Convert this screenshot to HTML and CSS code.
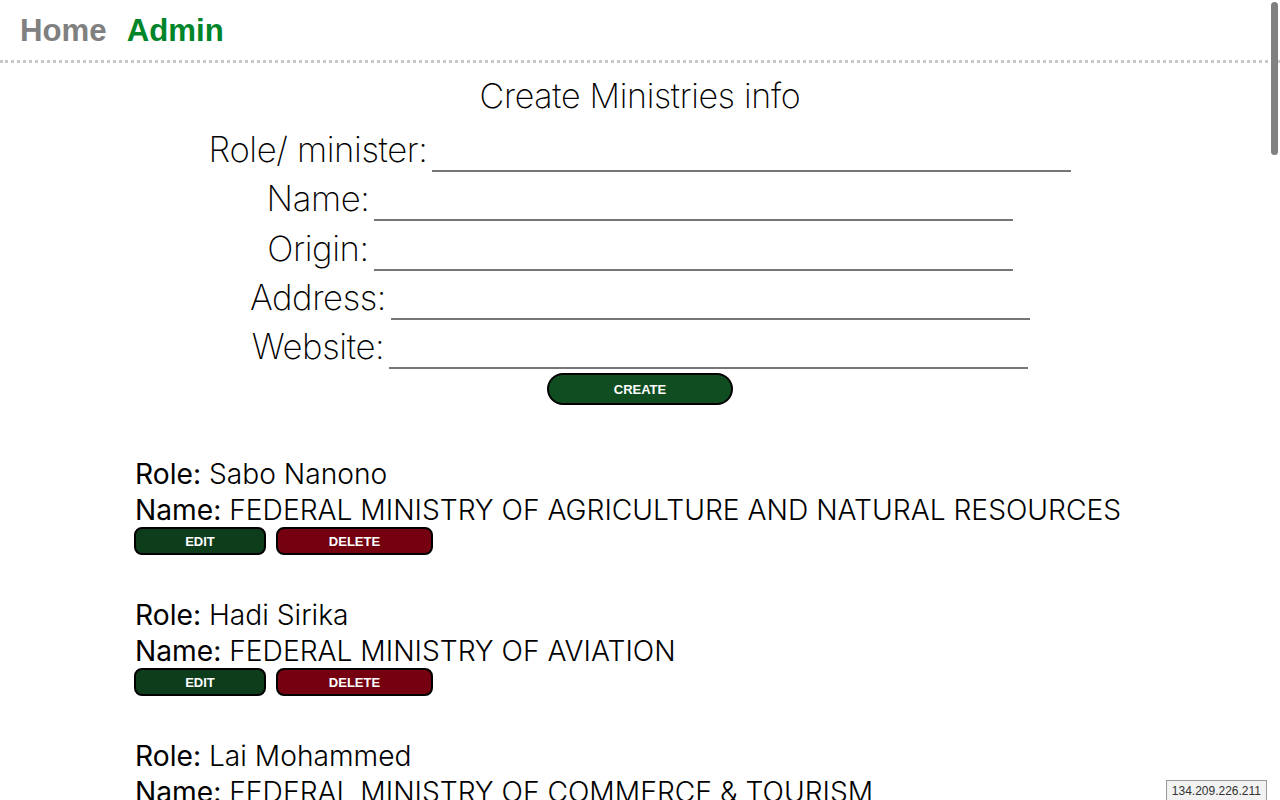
FILE: index.html
```html
<!DOCTYPE html>
<html lang="en">
<head>
<meta charset="utf-8">
<title>Admin - Ministries</title>
<link rel="stylesheet" href="styles.css">
</head>
<body>
<nav class="topnav">
  <a class="nav-link nav-home" href="#">Home</a>
  <a class="nav-link nav-admin" href="#">Admin</a>
</nav>
<main class="page">
  <form class="create-form">
    <h1 class="form-title">Create Ministries info</h1>
    <div class="form-row"><label class="form-label">Role/ minister:</label><input class="form-input" type="text"></div>
    <div class="form-row"><label class="form-label">Name:</label><input class="form-input" type="text"></div>
    <div class="form-row"><label class="form-label">Origin:</label><input class="form-input" type="text"></div>
    <div class="form-row"><label class="form-label">Address:</label><input class="form-input" type="text"></div>
    <div class="form-row"><label class="form-label">Website:</label><input class="form-input" type="text"></div>
    <div class="form-actions"><button class="btn-create" type="button">CREATE</button></div>
  </form>

  <section class="list">
    <article class="item">
      <div class="item-line"><span class="item-key">Role:</span> <span class="item-val">Sabo Nanono</span></div>
      <div class="item-line"><span class="item-key">Name:</span> <span class="item-val">FEDERAL MINISTRY OF AGRICULTURE AND NATURAL RESOURCES</span></div>
      <div class="item-actions"><button class="btn btn-edit" type="button">EDIT</button><button class="btn btn-delete" type="button">DELETE</button></div>
    </article>
    <article class="item">
      <div class="item-line"><span class="item-key">Role:</span> <span class="item-val">Hadi Sirika</span></div>
      <div class="item-line"><span class="item-key">Name:</span> <span class="item-val">FEDERAL MINISTRY OF AVIATION</span></div>
      <div class="item-actions"><button class="btn btn-edit" type="button">EDIT</button><button class="btn btn-delete" type="button">DELETE</button></div>
    </article>
    <article class="item">
      <div class="item-line"><span class="item-key">Role:</span> <span class="item-val">Lai Mohammed</span></div>
      <div class="item-line"><span class="item-key">Name:</span> <span class="item-val">FEDERAL MINISTRY OF COMMERCE &amp; TOURISM</span></div>
      <div class="item-actions"><button class="btn btn-edit" type="button">EDIT</button><button class="btn btn-delete" type="button">DELETE</button></div>
    </article>
  </section>
</main>
<div class="ip-badge">134.209.226.211</div>
<div class="scroll-thumb"></div>
</body>
</html>
```

FILE: styles.css
```css
html {
  scrollbar-width: none;
}
html::-webkit-scrollbar {
  display: none;
}
body {
  margin: 0;
  font-family: Inter, "Liberation Sans", sans-serif;
  color: #000;
  background: #fff;
}
.topnav {
  display: flex;
  align-items: center;
  gap: 20px;
  padding: 0 0 0 21px;
  border-bottom: 3px dotted #c8c8c8;
  box-sizing: border-box;
  height: 63px;
}
.nav-link {
  font-family: "Liberation Sans", Arial, sans-serif;
  font-weight: bold;
  font-size: 31.2px;
  text-decoration: none;
  line-height: 1;
  margin-top: 2px;
}
.nav-home { color: #808080; margin-left: -1px; }
.nav-admin { color: #00852a; }

.create-form {
  display: flex;
  flex-direction: column;
  align-items: center;
}
.form-title {
  margin: 12px 0 8px;
  font-size: 34px;
  font-weight: 200;
  line-height: 42px;
  letter-spacing: -0.3px;
}
.form-row {
  display: flex;
  align-items: baseline;
  justify-content: center;
  gap: 5px;
  height: 49.25px;
}
.form-label {
  font-size: 34.7px;
  font-weight: 200;
  line-height: 49px;
  letter-spacing: -0.4px;
}
.form-input {
  width: 639px;
  height: 30px;
  border: none;
  border-bottom: 2px solid #767676;
  padding: 0;
  font: inherit;
  font-size: 20px;
  outline: none;
  background: transparent;
}
.form-actions {
  margin-top: 2px;
}
.btn-create {
  width: 186px;
  height: 32px;
  border: 2px solid #000;
  border-radius: 16px;
  background: #104e22;
  color: #fff;
  font-family: "Liberation Sans", Arial, sans-serif;
  font-weight: bold;
  font-size: 13px;
  cursor: pointer;
}

.list {
  padding: 51px 0 0 135px;
}
.item {
  margin-bottom: 42px;
}
.item-line {
  font-size: 28.2px;
  line-height: 36px;
  white-space: nowrap;
}
.item-key { font-weight: 400; }
.item-val { font-weight: 300; }
.item-actions {
  display: flex;
  gap: 10px;
  margin-left: -1px;
  margin-top: -1px;
}
.btn {
  height: 28px;
  border: 2px solid #000;
  border-radius: 8px;
  color: #fff;
  font-family: "Liberation Sans", Arial, sans-serif;
  font-weight: bold;
  font-size: 13px;
  cursor: pointer;
}
.btn-edit { width: 132px; background: #0e3d1c; }
.btn-delete { width: 157px; background: #740010; }

.ip-badge {
  position: fixed;
  right: 13px;
  bottom: 0;
  padding: 3px 5px 2px;
  background: #f2f2f2;
  border: 1px solid #999;
  border-bottom: none;
  font-family: "Liberation Sans", Arial, sans-serif;
  font-size: 12px;
  color: #333;
}
.scroll-thumb {
  position: fixed;
  top: 2px;
  right: 2px;
  width: 7px;
  height: 153px;
  border-radius: 4px;
  background: #808080;
}
```
